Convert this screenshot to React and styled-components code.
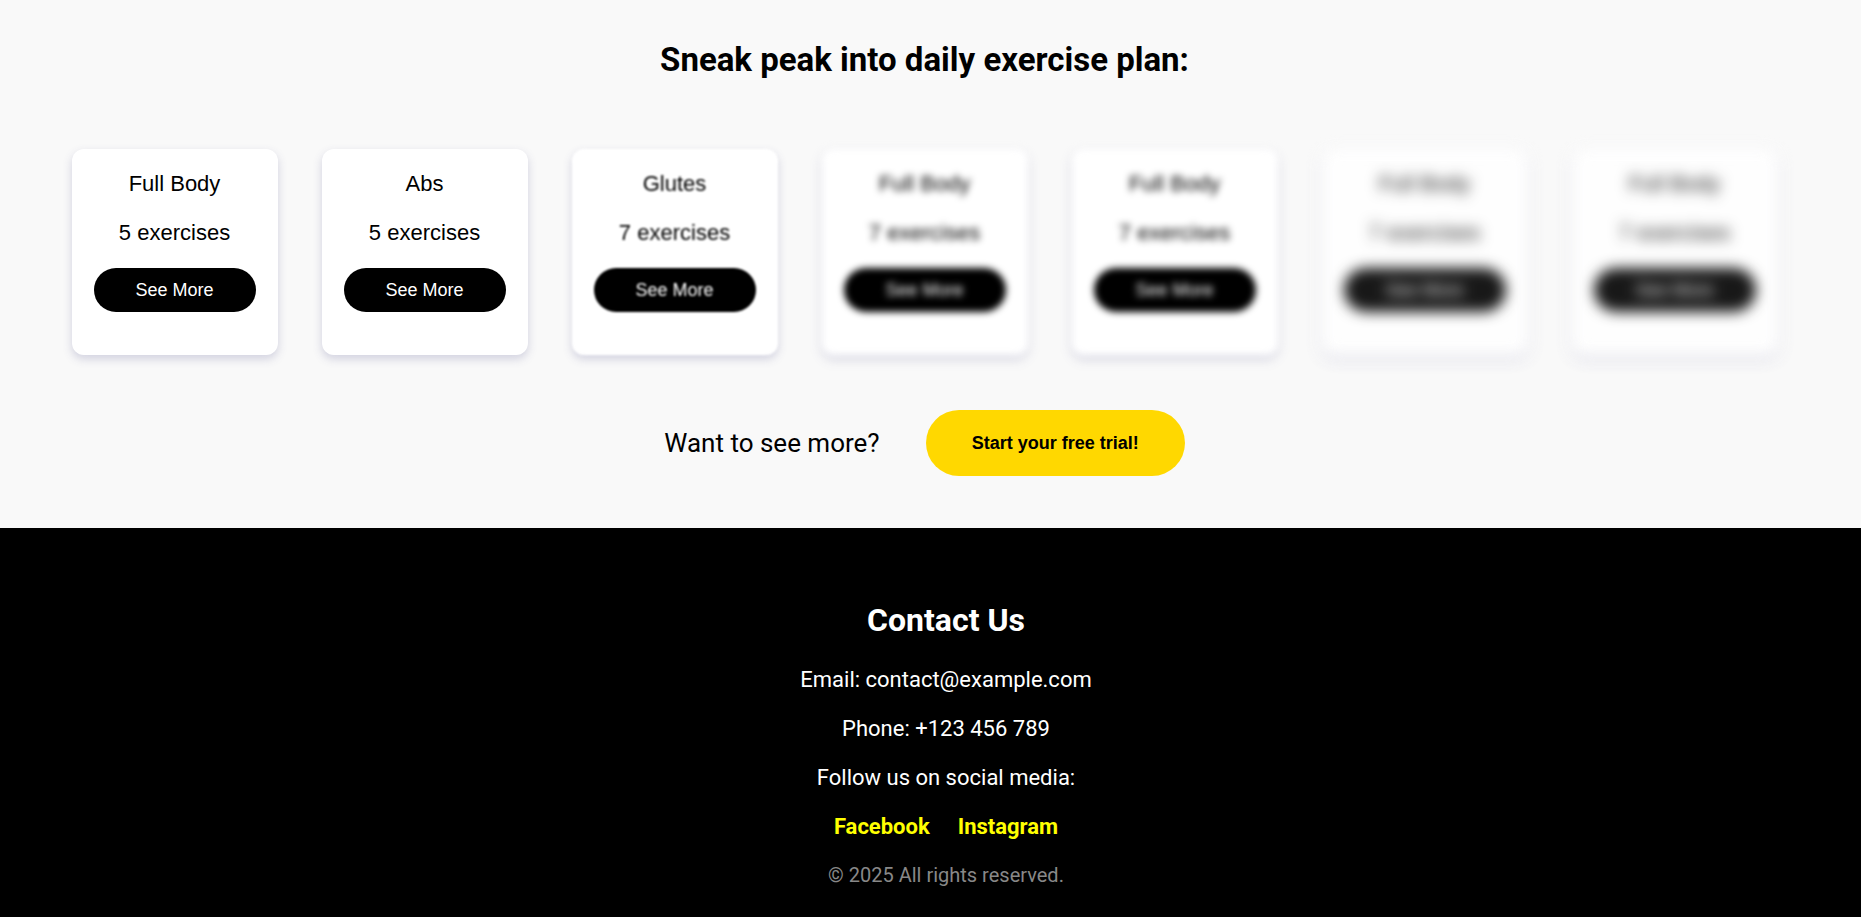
import React from "react";
import styled, { createGlobalStyle } from "styled-components";

const GlobalStyle = createGlobalStyle`
  html, body {
    margin: 0;
    padding: 0;
    background: #000;
  }
  body {
    font-family: Roboto, "Liberation Sans", sans-serif;
    overflow: hidden;
  }
`;

const plans = [
  { title: "Full Body", count: 5, blur: 0, fade: 1 },
  { title: "Abs", count: 5, blur: 0, fade: 1 },
  { title: "Glutes", count: 7, blur: 1, fade: 1 },
  { title: "Full Body", count: 7, blur: 3.5, fade: 1 },
  { title: "Full Body", count: 7, blur: 3.5, fade: 1 },
  { title: "Full Body", count: 7, blur: 7, fade: 0.9 },
  { title: "Full Body", count: 7, blur: 7, fade: 0.9 },
];

const App = () => {
  return (
    <Page>
      <GlobalStyle />
      <PlanSection>
        <Heading>Sneak peak into daily exercise plan:</Heading>
        <CardRow>
          {plans.map((p, i) => (
            <Card key={i} $blur={p.blur} $fade={p.fade}>
              <CardTitle>{p.title}</CardTitle>
              <CardCount>{p.count} exercises</CardCount>
              <SeeMore>See More</SeeMore>
            </Card>
          ))}
        </CardRow>
        <TrialRow>
          <TrialText>Want to see more?</TrialText>
          <TrialButton>Start your free trial!</TrialButton>
        </TrialRow>
      </PlanSection>
      <Footer>
        <FooterTitle>Contact Us</FooterTitle>
        <FooterLine>Email: contact@example.com</FooterLine>
        <FooterLine>Phone: +123 456 789</FooterLine>
        <FooterLine>Follow us on social media:</FooterLine>
        <Socials>
          <SocialLink href="#">Facebook</SocialLink>
          <SocialLink href="#">Instagram</SocialLink>
        </Socials>
        <Copyright>© 2025 All rights reserved.</Copyright>
      </Footer>
    </Page>
  );
};

export default App;

const Page = styled.div`
  width: 100%;
  height: 917px;
  display: flex;
  flex-direction: column;
`;

const PlanSection = styled.section`
  background: #f9f9f9;
  padding: 40px 12px 52px 0;
  display: flex;
  flex-direction: column;
  align-items: center;
`;

const Heading = styled.h2`
  margin: 0 0 70px;
  font-size: 33px;
  font-weight: 700;
  color: #000;
  line-height: normal;
`;

const CardRow = styled.div`
  display: flex;
  justify-content: center;
  gap: 44px;
`;

const Card = styled.div`
  width: 206px;
  box-sizing: border-box;
  padding: 22px 22px 43px;
  background: #fff;
  border-radius: 12px;
  box-shadow: 0 4px 10px rgba(70, 70, 130, 0.22);
  display: flex;
  flex-direction: column;
  align-items: center;
  font-family: "Liberation Sans", Arial, sans-serif;
  filter: ${(p) => (p.$blur ? `blur(${p.$blur}px)` : "none")};
  opacity: ${(p) => p.$fade};
`;

const CardTitle = styled.h3`
  margin: 0 0 23px;
  font-size: 22px;
  font-weight: 400;
  color: #000;
  line-height: normal;
`;

const CardCount = styled.p`
  margin: 0 0 22px;
  font-size: 22px;
  color: #000;
  line-height: normal;
`;

const SeeMore = styled.button`
  width: 100%;
  height: 44px;
  border: none;
  border-radius: 22px;
  background: #000;
  color: #fff;
  font-family: "Liberation Sans", Arial, sans-serif;
  font-size: 18px;
  cursor: pointer;
`;

const TrialRow = styled.div`
  margin-top: 55px;
  display: flex;
  align-items: center;
  gap: 46px;
`;

const TrialText = styled.p`
  margin: 0;
  font-size: 26px;
  color: #000;
  line-height: normal;
`;

const TrialButton = styled.button`
  height: 66px;
  padding: 0 46px;
  border: none;
  border-radius: 33px;
  background: #ffd800;
  color: #000;
  font-family: "Liberation Sans", Arial, sans-serif;
  font-size: 18px;
  font-weight: 700;
  cursor: pointer;
`;

const Footer = styled.footer`
  flex: 1;
  background: #000;
  color: #fff;
  padding: 73px 0 0 31px;
  display: flex;
  flex-direction: column;
  align-items: center;
`;

const FooterTitle = styled.h2`
  margin: 0 0 16px;
  font-size: 32px;
  font-weight: 700;
  line-height: normal;
`;

const FooterLine = styled.p`
  margin: 0;
  font-size: 22px;
  line-height: 49px;
`;

const Socials = styled.div`
  display: flex;
  gap: 28px;
  line-height: 49px;
`;

const SocialLink = styled.a`
  color: #ffff00;
  font-size: 22px;
  font-weight: 700;
  text-decoration: none;
`;

const Copyright = styled.p`
  margin: 0;
  font-size: 20px;
  line-height: 49px;
  color: #888;
`;
